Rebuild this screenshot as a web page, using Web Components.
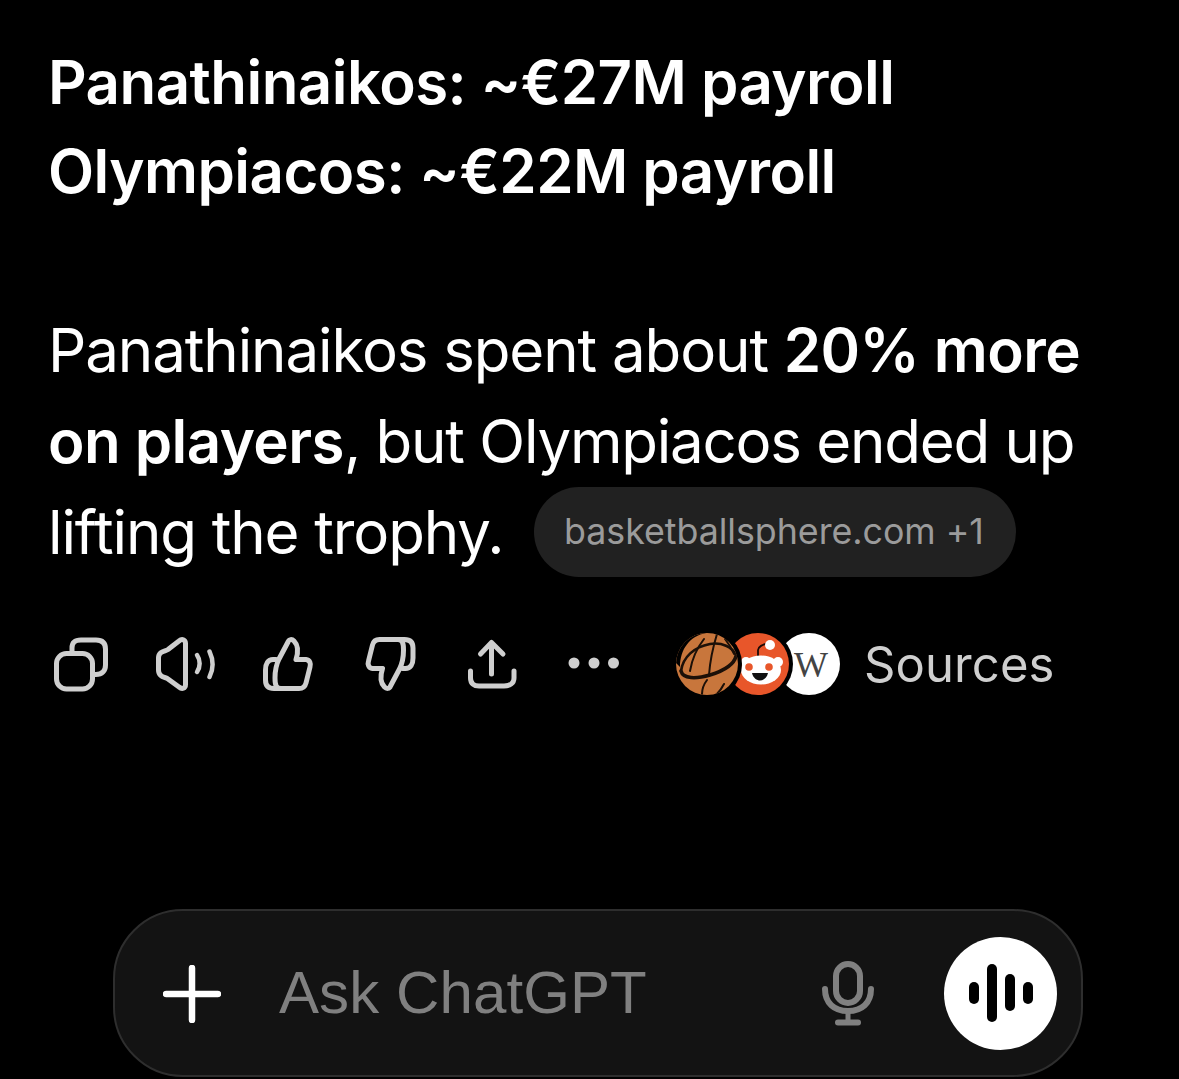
<!DOCTYPE html>
<html lang="en">
<head>
<meta charset="utf-8">
<title>ChatGPT answer</title>
<style>
html,body{margin:0;background:#000;}
body{font-family:Inter,"Liberation Sans",sans-serif;color:#fff;width:1179px;height:1079px;overflow:hidden;}
.tight{letter-spacing:-1.25px}
</style>
</head>
<body>
<chat-screen>
  <chat-message>
    <chat-para lh="88.5"><strong>Panathinaikos: ~€27M payroll</strong><br><strong>Olympiacos: ~€22M payroll</strong></chat-para>
    <chat-para lh="91">Panathinaikos spent about <strong>20% more</strong><br><strong>on players</strong><span class="tight">, but Olympiacos ended up</span><br>lifting the trophy.<source-pill>basketballsphere.com +1</source-pill></chat-para>
  </chat-message>
  <action-bar></action-bar>
  <chat-composer placeholder="Ask ChatGPT"></chat-composer>
</chat-screen>
<script>
function def(name, html, init){
  customElements.define(name, class extends HTMLElement{
    constructor(){super();this.attachShadow({mode:'open'}).innerHTML=html;}
    connectedCallback(){ if(init) init(this); }
  });
}
def('chat-screen',`<style>:host{display:flex;flex-direction:column;height:1079px;box-sizing:border-box;padding:38px 0 2px 50px}</style><slot></slot>`);
def('chat-message',`<style>
:host{display:flex;flex-direction:column;gap:90px;margin-left:-2px;font:400 60px/90px Inter,"Liberation Sans",sans-serif;letter-spacing:-1.1px;color:#fff;white-space:nowrap}
</style><slot></slot>`);
def('chat-para',`<style>
:host{display:block}
::slotted(strong){font-weight:600;letter-spacing:-.55px}
</style><slot></slot>`,el=>{el.style.lineHeight=el.getAttribute('lh')+'px';});
def('source-pill',`<style>
:host{display:inline-flex;align-items:center;justify-content:center;box-sizing:border-box;width:482px;height:90px;margin-left:31px;padding-right:3px;border-radius:45px;background:#212121;color:#9b9b9b;font:400 35.8px/1 Inter,"Liberation Sans",sans-serif;letter-spacing:-.05px;vertical-align:top}
</style><slot></slot>`);
const ico=(vb,body)=>`<svg width="63" height="60" viewBox="${vb} 634 63 60" fill="none" stroke="#cfcfcf" stroke-width="5" stroke-linecap="round" stroke-linejoin="round">${body}</svg>`;
const thumb=`<path d="M279 659L288 642C289 639 292 639 294 641C298 645 299 650 296 659.500H306C310 660 311 664 310 667L306 683C305 687 303 688.500 299 688.500H281C276 688.500 275 685 275 678C275 670 276 665 279 659Z"/><path d="M276 659.500H273C268 659.500 265.500 664 265.500 670V680C265.500 686 269 688.500 274 688.500H281"/>`;
def('action-bar',`<style>
:host{display:flex;align-items:center;gap:40px;margin-top:56px;height:60px}
svg{display:block;flex:none}
.stack{display:flex;margin-left:8px;height:62px}
.sources{font:400 49px/1 Inter,"Liberation Sans",sans-serif;letter-spacing:.1px;color:#cfcfcf;margin-left:-16px}
.c{width:62px;height:62px;border-radius:50%;flex:none;position:relative;overflow:hidden}
.ball{z-index:3;background:#c8763c;box-shadow:0 0 0 4px #000}
.red{z-index:2;background:#e8562a;margin-left:-11px;box-shadow:0 0 0 4px #000}
.wik{z-index:1;background:#fff;margin-left:-11px;display:flex;align-items:center;justify-content:flex-end}
.wik span{font:400 36px/1 "Liberation Serif",serif;color:#444;margin-right:12px;margin-top:2px}
.c svg{position:absolute;inset:0}
</style>
${ico('50',`<rect x="56.500" y="653.500" width="36" height="35.500" rx="10"/><path d="M72 651V648C72 642 75 640 81 640H96C102 640 105.500 643 105.500 649V665C105.500 671 102 674.500 96 674.500H94"/>`)}
${ico('153',`<path d="M185.500 643.500C185.500 639.500 182 638.500 179 641L168 649.500C165 651.500 158.500 651 158.500 658V670C158.500 677 165 677 168 679L179 687C182 689.500 185.500 688.500 185.500 684.500Z"/><path d="M197 655C200.500 660 200.500 667 197 672" stroke-width="4.500"/><path d="M209.500 651.500C213.500 660 213.500 669 209.500 677" stroke-width="4.500"/>`)}
${ico('256',thumb)}
${ico('359',`<g transform="rotate(180 339.250 664)">${thumb}</g>`)}
${ico('462',`<path d="M491.500 674V642.500M480.500 654L491.500 642.500L503 654"/><path d="M470.500 671V678C470.500 683.500 474 686 479 686H504C509.500 686 514 683.500 514 678V671"/>`)}
${ico('565',`<g fill="#cfcfcf" stroke="none"><circle cx="574" cy="663" r="5.500"/><circle cx="594" cy="663" r="5.500"/><circle cx="613.500" cy="663" r="5.500"/></g>`)}
<div class="stack">
  <div class="c ball"><svg viewBox="0 0 62 62" width="62" height="62" fill="none" stroke="#1c1008" stroke-linecap="round">
    <path d="M0 30C0 12 14 0 30 0C14 3 4 16 4 34Z" fill="#000" stroke="none"/>
    <path d="M5 38C7 24 18 14 34 11C46 9 56 14 60 22" stroke-width="2.600"/>
    <path d="M5 38C7 46 20 46 34 42C47 38 58 32 60 23" stroke-width="3.500"/>
    <path d="M28 6C21 15 16 26 14 38M41 1C37 14 34 28 33 42M49 6C53 11 56 16 58 21M26 61C26 55 28 51 31 47M48 51C46 55 44 58 40 62" stroke-width="2"/>
  </svg></div>
  <div class="c red"><svg viewBox="0 0 62 62" width="62" height="62">
    <path d="M31 25V17C31 14 36 11 40 11" fill="none" stroke="#1a0a06" stroke-width="1.800"/>
    <circle cx="43" cy="12" r="5" fill="#fff"/>
    <circle cx="19" cy="29" r="5" fill="#fff"/><circle cx="51" cy="29" r="5" fill="#fff"/>
    <ellipse cx="34" cy="37" rx="20" ry="14.500" fill="#fff"/>
    <circle cx="22" cy="34" r="3.800" fill="#e8562a"/><circle cx="42" cy="34" r="3.800" fill="#e8562a"/>
    <path d="M25 40H41C40 45 36 47.500 33 47.500C30 47.500 26 45 25 40Z" fill="#111"/>
  </svg></div>
  <div class="c wik"><span>W</span></div>
</div>
<div class="sources">Sources</div>`);
def('chat-composer',`<style>
:host{display:flex;align-items:center;box-sizing:border-box;width:970px;height:168px;margin-top:auto;margin-left:63px;border:2.500px solid #2e2e2e;border-radius:70px;background:#131313;padding:0 24px 0 48px}
svg{display:block;flex:none}
.plus{margin-top:2px}
.ph{font:400 60px/1 "Liberation Sans",sans-serif;color:#808080;margin-left:58px;flex:1;letter-spacing:.1px}
.mic{margin-top:1px;margin-right:-1px}
.send{width:113px;height:113px;border-radius:50%;background:#fff;display:flex;align-items:center;justify-content:center;margin-left:70px;flex:none}
</style>
<svg class="plus" width="58" height="58" viewBox="0 0 58 58" stroke="#fff" stroke-width="6.500" stroke-linecap="round"><path d="M29 3V55M3 29H55"/></svg>
<div class="ph" id="ph"></div>
<svg class="mic" width="54" height="66" viewBox="0 0 54 66" fill="none" stroke="#808080" stroke-linecap="round">
<rect x="15" y="3" width="24" height="39" rx="12" stroke-width="6"/>
<path d="M4 28C4 42 13 50 27 50C41 50 50 42 50 28" stroke-width="6"/><path d="M27 50V61" stroke-width="5"/><path d="M17 61.500H37" stroke-width="6"/></svg>
<div class="send"><svg width="64" height="58" viewBox="0 0 64 58" fill="#000">
<rect x="0" y="18" width="10" height="22" rx="5"/><rect x="18" y="0" width="10" height="58" rx="5"/><rect x="36" y="10" width="10" height="37" rx="5"/><rect x="54" y="18" width="10" height="22" rx="5"/></svg></div>`,
el=>{el.shadowRoot.getElementById('ph').textContent=el.getAttribute('placeholder');});
</script>
</body>
</html>
